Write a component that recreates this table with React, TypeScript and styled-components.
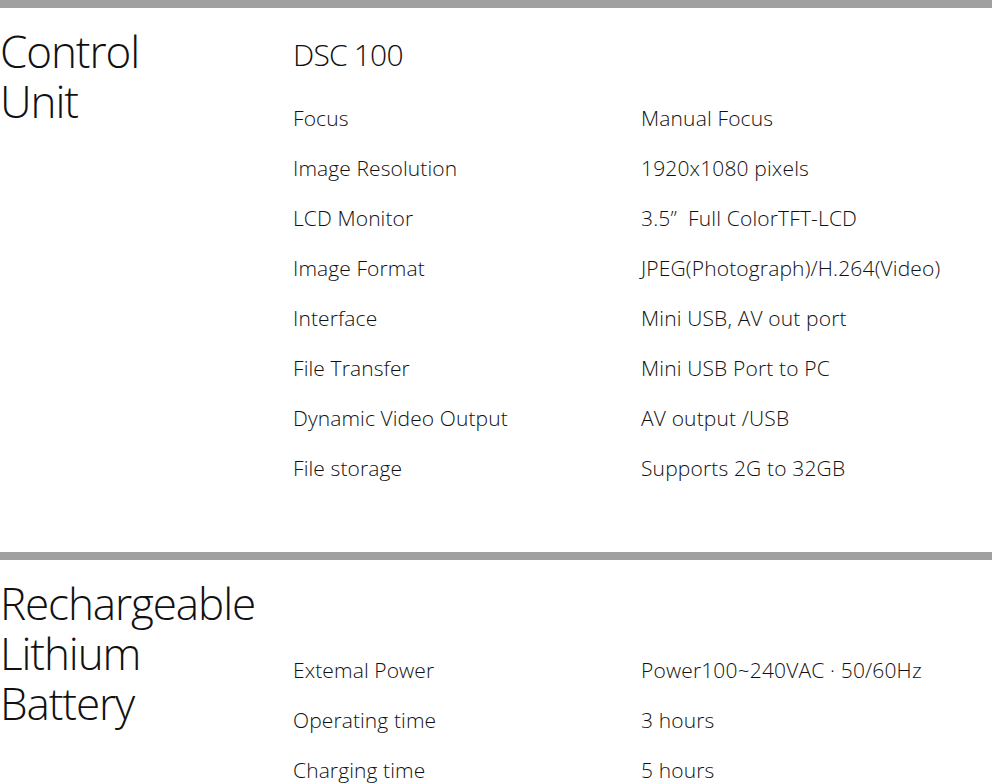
import * as React from 'react';
import styled, { createGlobalStyle } from 'styled-components';

const GlobalStyle = createGlobalStyle`
  html, body {
    margin: 0;
    padding: 0;
    background: #ffffff;
  }
  body {
    font-family: "Open Sans", "Noto Sans", sans-serif;
    color: #111111;
  }
`;

type Spec = { label: string; value: string };

type SpecSection = {
  title: string[];
  model?: string;
  specs: Spec[];
};

const sections: SpecSection[] = [
  {
    title: ['Control', 'Unit'],
    model: 'DSC 100',
    specs: [
      { label: 'Focus', value: 'Manual Focus' },
      { label: 'Image Resolution', value: '1920x1080 pixels' },
      { label: 'LCD Monitor', value: '3.5\u201D  Full ColorTFT-LCD' },
      { label: 'Image Format', value: 'JPEG(Photograph)/H.264(Video)' },
      { label: 'Interface', value: 'Mini USB, AV out port' },
      { label: 'File Transfer', value: 'Mini USB Port to PC' },
      { label: 'Dynamic Video Output', value: 'AV output /USB' },
      { label: 'File storage', value: 'Supports 2G to 32GB' },
    ],
  },
  {
    title: ['Rechargeable', 'Lithium', 'Battery'],
    specs: [
      { label: 'Extemal Power', value: 'Power100~240VAC \u00B7 50/60Hz' },
      { label: 'Operating time', value: '3 hours' },
      { label: 'Charging time', value: '5 hours' },
    ],
  },
];

const Page = styled.main`
  display: flex;
  flex-direction: column;
  width: 992px;
  overflow: hidden;
`;

const Section = styled.section`
  display: grid;
  grid-template-columns: 293px 1fr;
  border-top: 8px solid #a0a0a0;
  padding-bottom: 59px;
`;

// title lines are broken by hand, as on the original sheet
const Heading = styled.h2`
  margin: 0;
  padding-top: 18px;
  font-size: 44px;
  font-weight: 300;
  line-height: 50px;
  letter-spacing: -1.1px;
`;

const Details = styled.div`
  display: flex;
  flex-direction: column;
`;

const Model = styled.h3<{ $empty?: boolean }>`
  margin: 27px 0 18px;
  height: 40px;
  font-size: 30px;
  font-weight: 300;
  line-height: 40px;
  letter-spacing: -0.8px;
  visibility: ${(p) => (p.$empty ? 'hidden' : 'visible')};
`;

const SpecList = styled.dl`
  margin: 0;
  display: grid;
  grid-template-columns: 348px 1fr;
`;

const SpecLabel = styled.dt`
  font-size: 21px;
  font-weight: 300;
  line-height: 50px;
  letter-spacing: 0.1px;
  white-space: nowrap;
`;

const SpecValue = styled.dd`
  margin: 0;
  font-size: 21px;
  font-weight: 300;
  line-height: 50px;
  letter-spacing: 0.15px;
  white-space: pre;
`;

export default function App() {
  return (
    <>
      <GlobalStyle />
      <Page>
        {sections.map((section) => (
          <Section key={section.title.join(' ')}>
            <Heading>
              {section.title.map((line, i) => (
                <React.Fragment key={line}>
                  {i > 0 && <br />}
                  {line}
                </React.Fragment>
              ))}
            </Heading>
            <Details>
              <Model $empty={!section.model}>{section.model ?? '\u00A0'}</Model>
              <SpecList>
                {section.specs.map((spec) => (
                  <React.Fragment key={spec.label}>
                    <SpecLabel>{spec.label}</SpecLabel>
                    <SpecValue>{spec.value}</SpecValue>
                  </React.Fragment>
                ))}
              </SpecList>
            </Details>
          </Section>
        ))}
      </Page>
    </>
  );
}
